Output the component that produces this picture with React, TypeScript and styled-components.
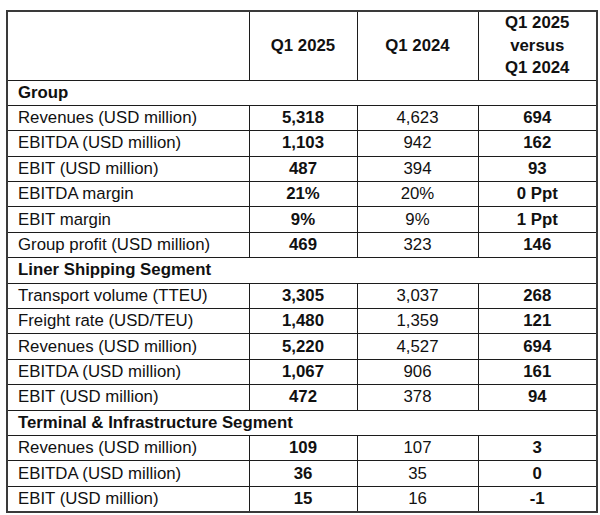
import React from "react";
import styled, { createGlobalStyle } from "styled-components";

const Global = createGlobalStyle`
  html, body { margin: 0; padding: 0; background: #ffffff; }
  body { font-family: "Liberation Sans", Arial, sans-serif; color: #111111; }
`;

const Page = styled.div`
  padding: 10px 4px 4px 6px;
`;

const Table = styled.table`
  border-collapse: collapse;
  width: 590px;
  table-layout: fixed;
  font-size: 16.8px;
  border: 2px solid #3a3a3a;
`;

const HeadCell = styled.th`
  border: 1px solid #1c1c1c;
  height: 67px;
  padding: 0 4px;
  font-weight: bold;
  text-align: center;
  vertical-align: middle;
  line-height: 22.5px;
`;

const SectionCell = styled.td`
  border: 1px solid #1c1c1c;
  height: 24.4px;
  padding: 0 0 0 10px;
  font-weight: bold;
  text-align: left;
  line-height: 20px;
  white-space: nowrap;
`;

const LabelCell = styled.td`
  border: 1px solid #1c1c1c;
  height: 24.4px;
  padding: 0 0 0 10px;
  text-align: left;
  line-height: 20px;
  white-space: nowrap;
`;

const ValueCell = styled.td<{ $bold?: boolean }>`
  border: 1px solid #1c1c1c;
  height: 24.4px;
  padding: 0;
  text-align: center;
  line-height: 20px;
  font-weight: ${(p) => (p.$bold ? "bold" : "normal")};
`;

type Row = [string, string, string, string];
type Section = { title: string; rows: Row[] };

const sections: Section[] = [
  {
    title: "Group",
    rows: [
      ["Revenues (USD million)", "5,318", "4,623", "694"],
      ["EBITDA (USD million)", "1,103", "942", "162"],
      ["EBIT (USD million)", "487", "394", "93"],
      ["EBITDA margin", "21%", "20%", "0 Ppt"],
      ["EBIT margin", "9%", "9%", "1 Ppt"],
      ["Group profit (USD million)", "469", "323", "146"],
    ],
  },
  {
    title: "Liner Shipping Segment",
    rows: [
      ["Transport volume (TTEU)", "3,305", "3,037", "268"],
      ["Freight rate (USD/TEU)", "1,480", "1,359", "121"],
      ["Revenues (USD million)", "5,220", "4,527", "694"],
      ["EBITDA (USD million)", "1,067", "906", "161"],
      ["EBIT (USD million)", "472", "378", "94"],
    ],
  },
  {
    title: "Terminal & Infrastructure Segment",
    rows: [
      ["Revenues (USD million)", "109", "107", "3"],
      ["EBITDA (USD million)", "36", "35", "0"],
      ["EBIT (USD million)", "15", "16", "-1"],
    ],
  },
];

export default function App() {
  return (
    <>
      <Global />
      <Page>
        <Table>
          <colgroup>
            <col style={{ width: 242 }} />
            <col style={{ width: 108 }} />
            <col style={{ width: 121 }} />
            <col style={{ width: 119 }} />
          </colgroup>
          <thead>
            <tr>
              <HeadCell />
              <HeadCell>Q1 2025</HeadCell>
              <HeadCell>Q1 2024</HeadCell>
              <HeadCell>
                Q1 2025
                <br />
                versus
                <br />
                Q1 2024
              </HeadCell>
            </tr>
          </thead>
          <tbody>
            {sections.map((s) => (
              <React.Fragment key={s.title}>
                <tr>
                  <SectionCell colSpan={4}>{s.title}</SectionCell>
                </tr>
                {s.rows.map((r, i) => (
                  <tr key={s.title + i}>
                    <LabelCell>{r[0]}</LabelCell>
                    <ValueCell $bold>{r[1]}</ValueCell>
                    <ValueCell>{r[2]}</ValueCell>
                    <ValueCell $bold>{r[3]}</ValueCell>
                  </tr>
                ))}
              </React.Fragment>
            ))}
          </tbody>
        </Table>
      </Page>
    </>
  );
}
